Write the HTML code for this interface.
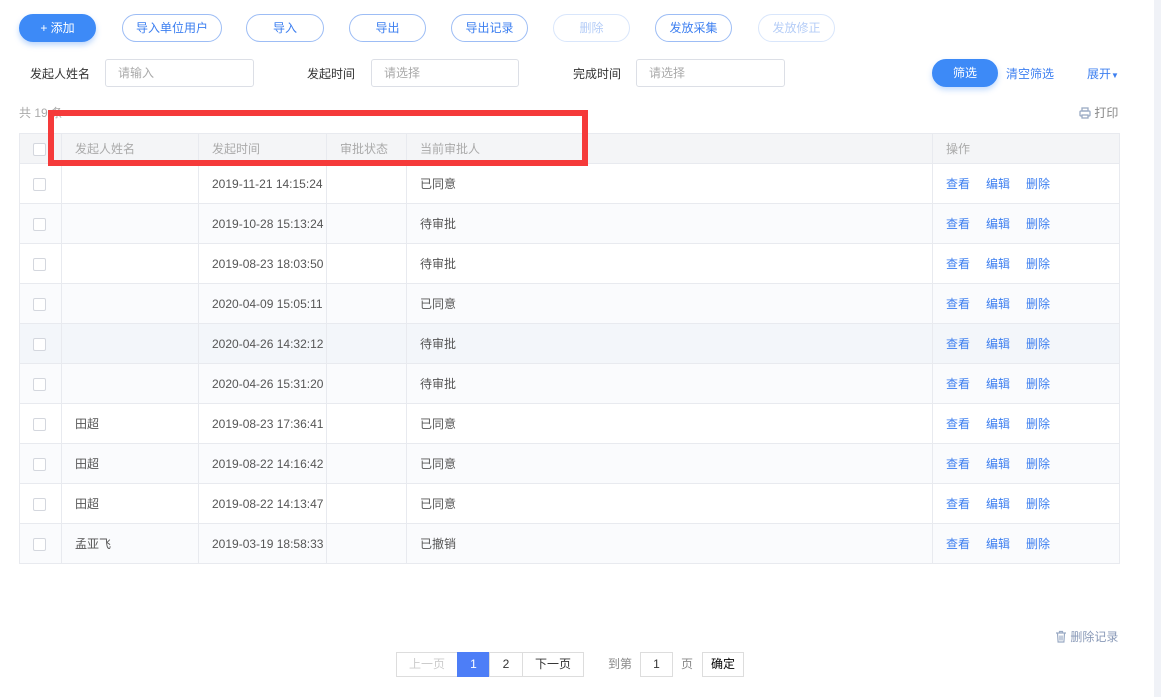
<!DOCTYPE html>
<html><head><meta charset="utf-8"><style>
*{box-sizing:border-box;margin:0;padding:0}
body{width:1161px;height:697px;background:#fff;font-family:"Liberation Sans","Noto Sans CJK SC",sans-serif;font-size:12px;color:#333;position:relative;overflow:hidden}
.a{position:absolute}
.btn{position:absolute;top:14px;height:28px;border:1px solid #9dbdf5;border-radius:14px;color:#3d7ff0;text-align:center;line-height:26px;font-size:12px;background:#fff}
.dis{border-color:#d9e6fb;color:#b5cdf7}
.inp{position:absolute;top:59px;height:28px;border:1px solid #dcdfe6;border-radius:3px;color:#aaa;padding-left:12px;line-height:26px}
.lbl{position:absolute;top:65px;color:#333}
table{position:absolute;left:19px;top:133px;width:1101px;border-collapse:collapse;table-layout:fixed}
td,th{border:1px solid #e8eaef;height:40px;font-weight:normal;text-align:left;padding-left:13px;color:#555}
th{height:30px;background:#f4f5f7;color:#aaa}
tr:nth-child(odd) td{background:#fafbfd}
tr.h td{background:#f3f6fa}
.cb{display:inline-block;width:13px;height:13px;border:1px solid #d4d7de;border-radius:2px;background:#fff;vertical-align:middle}
.op{color:#3d7ff0;margin-right:16px}
.pg{position:absolute;top:652px;height:25px;border:1px solid #ddd;text-align:center;line-height:23px;background:#fff}
</style></head><body>
<div class="a" style="left:1154px;top:0;width:7px;height:697px;background:#f0f2f7"></div>
<div class="btn" style="left:19px;width:77px;background:#3d8af7;border-color:#3d8af7;color:#fff;box-shadow:0 3px 6px rgba(61,138,247,.35)">+ 添加</div>
<div class="btn" style="left:122px;width:100px">导入单位用户</div>
<div class="btn" style="left:246px;width:78px">导入</div>
<div class="btn" style="left:349px;width:77px">导出</div>
<div class="btn" style="left:451px;width:77px">导出记录</div>
<div class="btn dis" style="left:553px;width:77px">删除</div>
<div class="btn" style="left:655px;width:77px">发放采集</div>
<div class="btn dis" style="left:758px;width:77px">发放修正</div>

<div class="lbl" style="left:30px">发起人姓名</div>
<div class="inp" style="left:105px;width:149px">请输入</div>
<div class="lbl" style="left:307px">发起时间</div>
<div class="inp" style="left:371px;width:148px">请选择</div>
<div class="lbl" style="left:573px">完成时间</div>
<div class="inp" style="left:636px;width:149px">请选择</div>
<div class="btn" style="left:932px;top:59px;width:66px;background:#3d8af7;border-color:#3d8af7;color:#fff;box-shadow:0 3px 6px rgba(61,138,247,.3)">筛选</div>
<div class="a" style="left:1006px;top:65px;color:#3d7ff0">清空筛选</div>
<div class="a" style="left:1087px;top:65px;color:#3d7ff0">展开<span style="font-size:8px">▼</span></div>
<div class="a" style="left:19px;top:104px;color:#aaa">共 19 条</div>
<div class="a" style="left:1079px;top:104px;color:#888"><svg width="12" height="12" viewBox="0 0 12 12" style="vertical-align:-2px"><rect x="3" y="1" width="6" height="3" fill="none" stroke="#9aaac4" stroke-width="1.3"/><rect x="1" y="4" width="10" height="5" rx="1" fill="none" stroke="#9aaac4" stroke-width="1.3"/><rect x="3" y="8" width="6" height="3" fill="#fff" stroke="#9aaac4" stroke-width="1.3"/></svg> 打印</div>

<table>
<colgroup><col style="width:42px"><col style="width:137px"><col style="width:128px"><col style="width:80px"><col style="width:526px"><col></colgroup>
<tr><th><span class="cb"></span></th><th>发起人姓名</th><th>发起时间</th><th>审批状态</th><th>当前审批人</th><th>操作</th></tr>
<tr><td><span class="cb"></span></td><td></td><td>2019-11-21 14:15:24</td><td></td><td>已同意</td><td><span class="op">查看</span><span class="op">编辑</span><span class="op">删除</span></td></tr>
<tr><td><span class="cb"></span></td><td></td><td>2019-10-28 15:13:24</td><td></td><td>待审批</td><td><span class="op">查看</span><span class="op">编辑</span><span class="op">删除</span></td></tr>
<tr><td><span class="cb"></span></td><td></td><td>2019-08-23 18:03:50</td><td></td><td>待审批</td><td><span class="op">查看</span><span class="op">编辑</span><span class="op">删除</span></td></tr>
<tr><td><span class="cb"></span></td><td></td><td>2020-04-09 15:05:11</td><td></td><td>已同意</td><td><span class="op">查看</span><span class="op">编辑</span><span class="op">删除</span></td></tr>
<tr class="h"><td><span class="cb"></span></td><td></td><td>2020-04-26 14:32:12</td><td></td><td>待审批</td><td><span class="op">查看</span><span class="op">编辑</span><span class="op">删除</span></td></tr>
<tr><td><span class="cb"></span></td><td></td><td>2020-04-26 15:31:20</td><td></td><td>待审批</td><td><span class="op">查看</span><span class="op">编辑</span><span class="op">删除</span></td></tr>
<tr><td><span class="cb"></span></td><td>田超</td><td>2019-08-23 17:36:41</td><td></td><td>已同意</td><td><span class="op">查看</span><span class="op">编辑</span><span class="op">删除</span></td></tr>
<tr><td><span class="cb"></span></td><td>田超</td><td>2019-08-22 14:16:42</td><td></td><td>已同意</td><td><span class="op">查看</span><span class="op">编辑</span><span class="op">删除</span></td></tr>
<tr><td><span class="cb"></span></td><td>田超</td><td>2019-08-22 14:13:47</td><td></td><td>已同意</td><td><span class="op">查看</span><span class="op">编辑</span><span class="op">删除</span></td></tr>
<tr><td><span class="cb"></span></td><td>孟亚飞</td><td>2019-03-19 18:58:33</td><td></td><td>已撤销</td><td><span class="op">查看</span><span class="op">编辑</span><span class="op">删除</span></td></tr>
</table>
<div class="a" style="left:48px;top:110px;width:540px;height:56px;border:6px solid #f53a3a"></div>

<div class="a" style="left:1055px;top:628px;color:#8a9ab8"><svg width="12" height="13" viewBox="0 0 12 13" style="vertical-align:-2px"><path d="M1 3h10M4.5 3V1.5h3V3M2.5 3.5l.6 8.5h5.8l.6-8.5M5 5.5v5M7 5.5v5" fill="none" stroke="#9aaac4" stroke-width="1.2"/></svg> 删除记录</div>
<div class="pg" style="left:396px;width:62px;color:#ccc">上一页</div>
<div class="pg" style="left:457px;width:33px;background:#4d7ef7;border-color:#4d7ef7;color:#fff">1</div>
<div class="pg" style="left:489px;width:34px">2</div>
<div class="pg" style="left:522px;width:62px">下一页</div>
<div class="a" style="left:608px;top:655px;color:#888">到第</div>
<div class="pg" style="left:640px;width:33px">1</div>
<div class="a" style="left:681px;top:655px;color:#888">页</div>
<div class="pg" style="left:702px;width:42px;color:#000">确定</div>
</body></html>
